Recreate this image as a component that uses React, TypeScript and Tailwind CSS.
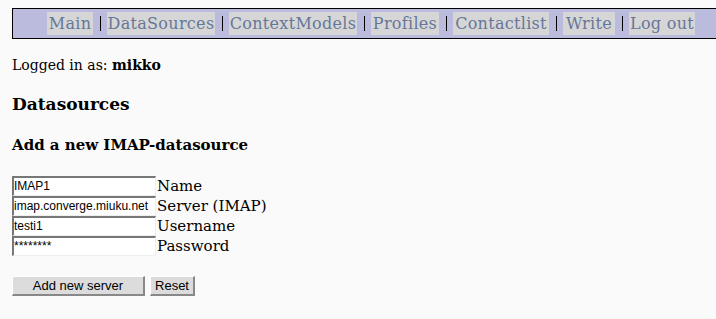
export default function App() {
  const links = [
    { t: 'Main', w: 'w-[46px]' },
    { t: 'DataSources', w: 'w-[108px]' },
    { t: 'ContextModels', w: 'w-[128px]' },
    { t: 'Profiles', w: 'w-[68px]' },
    { t: 'Contactlist', w: 'w-[96px]' },
    { t: 'Write', w: 'w-[52px]' },
    { t: 'Log out', w: 'w-[66px]' },
  ];
  const fields = [
    { value: 'IMAP1', label: 'Name' },
    { value: 'imap.converge.miuku.net', label: 'Server (IMAP)' },
    { value: 'testi1', label: 'Username' },
    { value: '********', label: 'Password' },
  ];

  return (
    <div className="min-h-[319px] bg-[#fafafa] text-black font-['DejaVu_Serif',serif] pl-3 pt-2 overflow-hidden">
      {/* Menu bar */}
      <div className="w-[710px] h-[31px] border border-black bg-[#bbbbdd] flex items-center pl-[34px] whitespace-nowrap">
        {links.map((l, i) => (
          <div key={l.t} className="flex items-center">
            {i > 0 && (
              <span className="w-[14px] flex justify-center">
                <span className="w-px h-[15px] bg-black" />
              </span>
            )}
            <span className={`${l.w} bg-[#d6d6d6] text-[#66779a] text-[16px] h-[23px] flex items-center justify-center tracking-[0.3px]`}>
              {l.t}
            </span>
          </div>
        ))}
      </div>

      <p className="mt-[17px] text-[14px] leading-[18px]">
        Logged in as: <b>mikko</b>
      </p>

      <h2 className="mt-[20px] text-[17px] font-bold leading-[20px]">Datasources</h2>

      <h3 className="mt-[22px] text-[15px] font-bold leading-[18px]">Add a new IMAP-datasource</h3>

      <div className="mt-[22px] flex flex-col">
        {fields.map((f) => (
          <div key={f.label} className="flex items-center h-[20px]">
            <div className="w-[144px] h-[20px] bg-white border-t-2 border-l-2 border-[#777777] border-r border-b border-r-[#eeeeee] border-b-[#eeeeee] font-['Liberation_Sans',sans-serif] text-[12px] leading-[16px] overflow-hidden whitespace-nowrap">
              {f.value}
            </div>
            <span className="ml-[1px] text-[15px] leading-[20px]">{f.label}</span>
          </div>
        ))}
      </div>

      <div className="mt-[20px] flex gap-[5px] font-['Liberation_Sans',sans-serif] text-[13px]">
        <button className="w-[133px] h-[20px] bg-[#dcdcdc] border border-t-white border-l-white border-r-2 border-b-2 border-r-[#888888] border-b-[#888888] leading-none">
          Add new server
        </button>
        <button className="w-[45px] h-[20px] bg-[#dcdcdc] border border-t-white border-l-white border-r-2 border-b-2 border-r-[#888888] border-b-[#888888] leading-none">
          Reset
        </button>
      </div>
    </div>
  );
}
